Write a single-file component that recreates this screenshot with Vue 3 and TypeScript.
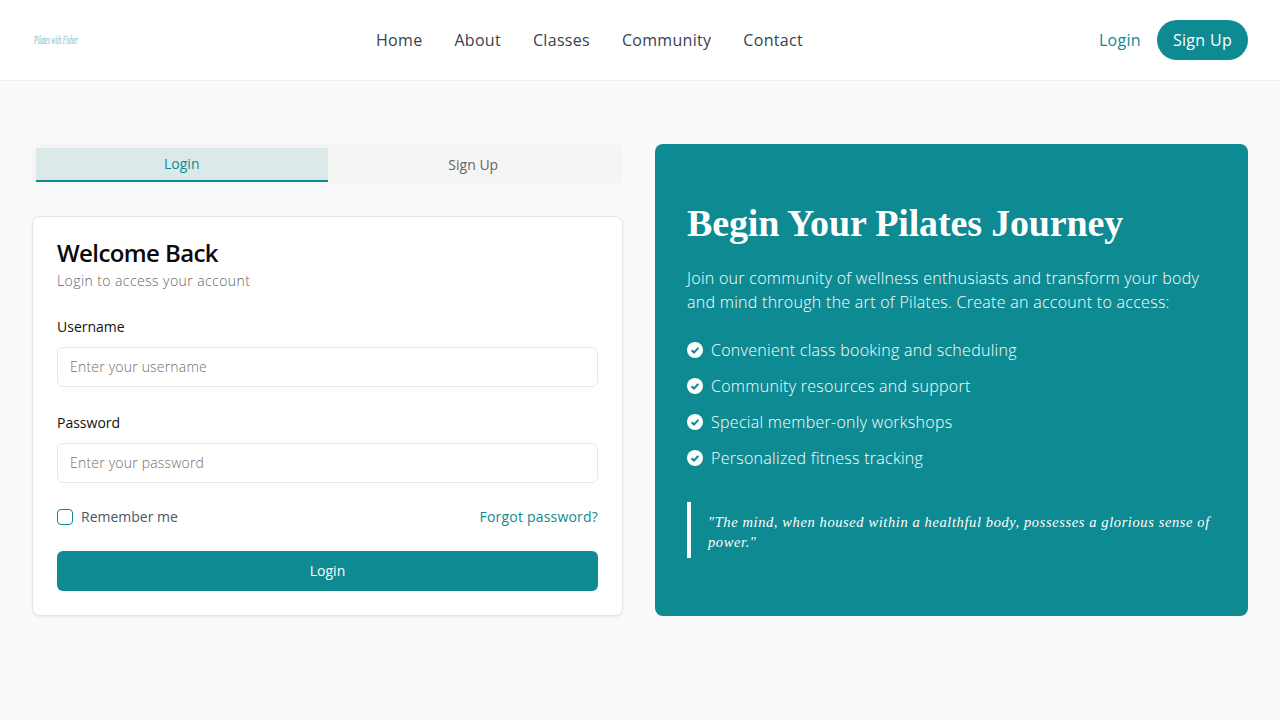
<script setup lang="ts">
const links: string[] = ['Home', 'About', 'Classes', 'Community', 'Contact']
const perks: string[] = [
  'Convenient class booking and scheduling',
  'Community resources and support',
  'Special member-only workshops',
  'Personalized fitness tracking',
]
</script>

<template>
  <div class="page">
    <header class="nav">
      <div class="logo"><span>Pilates with Fisher</span></div>
      <nav class="links">
        <a v-for="l in links" :key="l">{{ l }}</a>
      </nav>
      <div class="actions">
        <a class="login-link">Login</a>
        <a class="signup">Sign Up</a>
      </div>
    </header>
    <main class="main">
      <section class="left">
        <div class="tabs">
          <div class="tab active">Login</div>
          <div class="tab">Sign Up</div>
        </div>
        <div class="card">
          <h2>Welcome Back</h2>
          <p class="sub">Login to access your account</p>
          <div class="field">
            <label>Username</label>
            <input placeholder="Enter your username" />
          </div>
          <div class="field">
            <label>Password</label>
            <input placeholder="Enter your password" />
          </div>
          <div class="row">
            <span class="remember"><span class="box"></span><span class="row-text">Remember me</span></span>
            <a class="forgot row-text">Forgot password?</a>
          </div>
          <button class="submit">Login</button>
        </div>
      </section>
      <section class="panel">
        <h1>Begin Your Pilates Journey</h1>
        <p class="intro">Join our community of wellness enthusiasts and transform your body and mind through the art of Pilates. Create an account to access:</p>
        <ul>
          <li v-for="p in perks" :key="p">
            <svg width="16" height="16" viewBox="0 0 16 16"><circle cx="8" cy="8" r="8" fill="#fff" /><path d="M4.6 8.2 7 10.5l4.4-4.6" fill="none" stroke="#0e8a92" stroke-width="2" /></svg>
            {{ p }}
          </li>
        </ul>
        <blockquote>"The mind, when housed within a healthful body, possesses a glorious sense of power."</blockquote>
      </section>
    </main>
  </div>
</template>

<style>
body { background: #f9fafb; }
</style>

<style scoped>
.page { min-height: 720px; background: #f9fafb; font-family: "Open Sans", Lato, sans-serif; color: #333; }
.nav { height: 80px; box-sizing: content-box; background: #fff; border-bottom: 1px solid #eceef0; display: flex; align-items: center; justify-content: space-between; padding: 0 32px; }
.logo { width: 48px; overflow: hidden; }
.logo span { display: block; padding-left: 4px; font-family: "Liberation Serif", serif; font-style: italic; font-size: 12px; color: #6dbcc0; white-space: nowrap; transform: scaleX(.48); transform-origin: left center; }
.links { display: flex; gap: 32px; font-size: 16px; letter-spacing: 0.3px; color: #374151; }
.actions { display: flex; align-items: center; gap: 16px; font-size: 16px; letter-spacing: 0.3px; }
.login-link { color: #0e8a92; }
.signup { background: #0e8a92; color: #fff; height: 40px; line-height: 40px; padding: 0 16px; border-radius: 20px; }
.main { display: grid; grid-template-columns: 591px 593px; gap: 32px; padding: 63px 32px 0; }
.tabs { display: flex; height: 40px; box-sizing: border-box; padding: 4px; background: #f5f5f3; border-radius: 6px; margin-bottom: 32px; }
.tab { flex: 1; height: 34px; line-height: 34px; text-align: center; font-size: 14px; color: #666; }
.tab.active { background: #dce9e9; color: #0e8a92; border-bottom: 2px solid #0e8a92; height: 32px; line-height: 32px; }
.card { height: 400px; box-sizing: border-box; background: #fff; border: 1px solid #e5e7eb; border-radius: 8px; box-shadow: 0 1px 3px rgba(0,0,0,.08); padding: 24px; }
h2 { margin: -2px 0 0; font-size: 24px; line-height: 28px; font-weight: 600; color: #0a0a0a; letter-spacing: -0.6px; }
.sub { margin: 4px 0 26px; font-size: 14px; font-weight: 300; line-height: 20px; letter-spacing: 0.42px; color: #666; }
.field { margin-bottom: 26px; }
.field + .field { margin-bottom: 24px; }
.field label { display: block; font-size: 14px; line-height: 20px; margin-bottom: 10px; color: #111; }
.field input { display: block; width: 100%; height: 40px; box-sizing: border-box; border: 1px solid #e5e7eb; border-radius: 6px; padding: 0 12px 2px; font: inherit; font-size: 14px; font-weight: 300; letter-spacing: 0.2px; background: #fff; }
.field input::placeholder { color: #707070; opacity: 1; }
.row { display: flex; justify-content: space-between; align-items: center; font-size: 14px; height: 20px; margin-bottom: 24px; }
.row-text { padding-bottom: 2px; }
.remember { display: flex; align-items: center; gap: 8px; color: #4b5563; }
.box { width: 16px; height: 16px; box-sizing: border-box; border: 1px solid #0e8a92; border-radius: 4px; }
.forgot { color: #0e8a92; letter-spacing: 0.2px; }
.submit { display: block; width: 100%; height: 40px; border: 0; border-radius: 6px; padding: 0 0 2px; background: #0e8a92; color: #fff; font: inherit; font-size: 14px; }
.panel { height: 472px; box-sizing: border-box; background: #0e8a92; border-radius: 8px; padding: 56px 32px 0; color: #fff; }
h1 { margin: 0 0 20px; font-family: "Liberation Serif", serif; font-size: 38px; line-height: 46px; font-weight: 700; color: #fff; letter-spacing: -0.16px; }
.intro { margin: 0 0 24px; font-size: 16px; font-weight: 300; line-height: 24px; letter-spacing: 0.28px; }
ul { list-style: none; margin: 0 0 32px; padding: 0; }
li { display: flex; align-items: center; gap: 8px; height: 24px; margin-bottom: 12px; font-size: 16px; font-weight: 300; letter-spacing: 0.28px; }
li:last-child { margin-bottom: 0; }
blockquote { margin: 0; border-left: 4px solid #fff; padding: 10px 0 6px 17px; font-family: "Liberation Serif", serif; font-style: italic; font-size: 14.5px; line-height: 20px; letter-spacing: 0.6px; color: #fff; }
</style>
